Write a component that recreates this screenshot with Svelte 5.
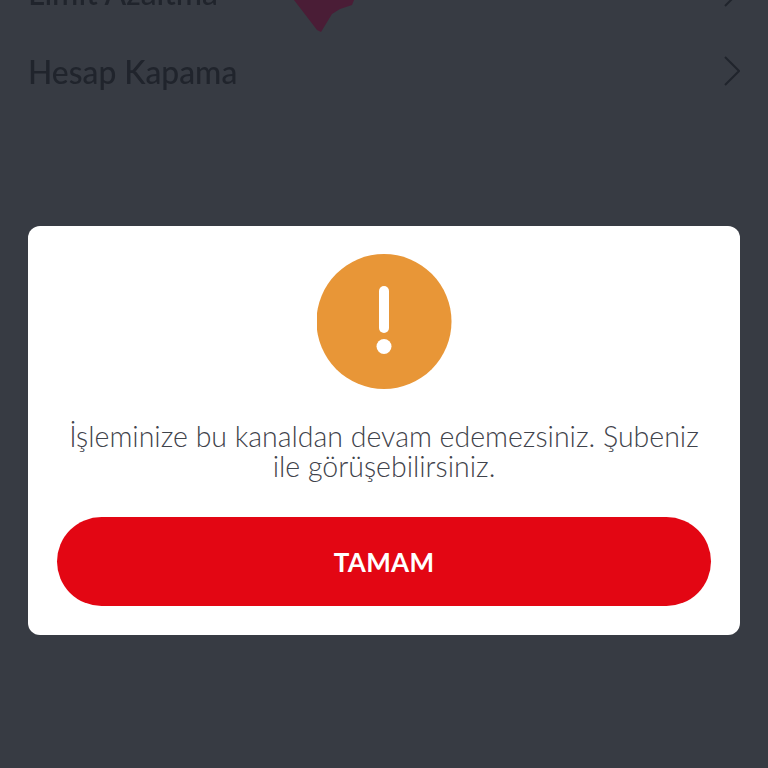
<script>
  const rows = ['Limit Azaltma', 'Hesap Kapama'];
</script>

<div class="screen">
  <div class="list">
    {#each rows as row}
      <div class="row">
        <span>{row}</span>
        <svg width="16" height="30" viewBox="0 0 16 30" fill="none" stroke="#20242c" stroke-width="2"><path d="M1 1 L15 15 L1 29" /></svg>
      </div>
    {/each}
    <svg class="mark" width="60" height="32" viewBox="0 0 60 32"><path d="M0 0 H60 L58 5 L46 9 L38 14 L27 32 L23 30 Z" fill="#4a1d36" /></svg>
  </div>

  <div class="overlay">
    <div class="card">
      <div class="icon">
        <svg width="135" height="135" viewBox="0 0 135 135">
          <circle cx="67" cy="67.500" r="67.500" fill="#e89637" />
          <rect x="62" y="32" width="10" height="47" rx="5" fill="#fff" />
          <circle cx="67" cy="92.500" r="7.500" fill="#fff" />
        </svg>
      </div>
      <p>İşleminize bu kanaldan devam edemezsiniz. Şubeniz ile görüşebilirsiniz.</p>
      <button>TAMAM</button>
    </div>
  </div>
</div>

<style>
  :global(body) { margin: 0; background: #373b43; }
  .screen { position: relative; width: 768px; height: 768px; overflow: hidden; background: #373b43; font-family: Lato, "Open Sans", sans-serif; }
  .list { position: relative; margin-top: -47px; padding: 0 28px; }
  .row { display: flex; justify-content: space-between; align-items: center; height: 79px; color: #20242c; font-size: 31.800px; font-weight: 500; }
  .row svg { margin-top: -2px; }
  .row span { filter: blur(0.5px); }
  .mark { position: absolute; left: 294px; top: 47px; }
  .overlay { position: absolute; inset: 0; padding: 226px 28px 0; }
  .card { background: #fff; border-radius: 12px; height: 409px; box-sizing: border-box; padding: 28px 29px 0; display: flex; flex-direction: column; align-items: center; }
  .icon { height: 135px; }
  .icon svg { display: block; }
  p { margin: 32px 0 0; height: 61px; text-align: center; font-size: 28.500px; line-height: 30px; color: #3f434b; font-weight: 300; }
  button { margin-top: 35px; width: 654px; height: 89px; flex: none; border: 0; border-radius: 45px; background: #e30613; color: #fff; font-family: inherit; font-size: 26px; font-weight: 700; letter-spacing: 0.3px; }
</style>
